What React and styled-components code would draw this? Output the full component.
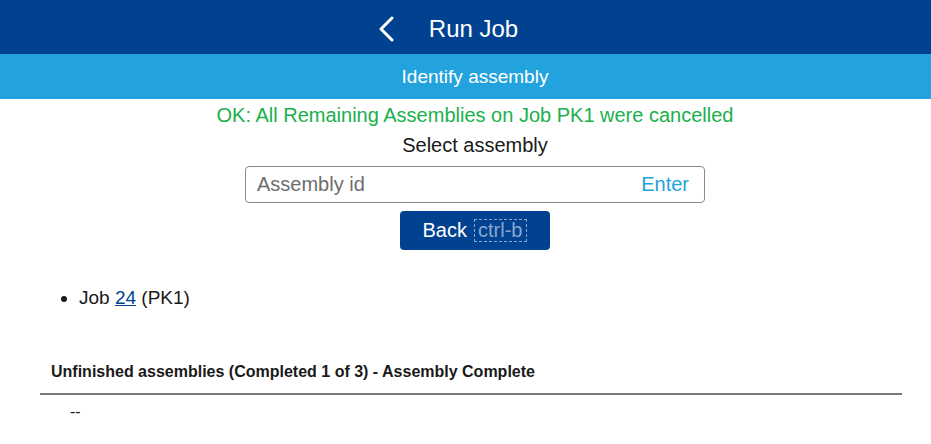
import React from 'react';
import styled, { createGlobalStyle } from 'styled-components';

const GlobalStyle = createGlobalStyle`
  body {
    margin: 0;
    font-family: 'Liberation Sans', Arial, sans-serif;
    background-color: #ffffff;
    color: #1a1a1a;
  }
`;

const TopBar = styled.div`
  height: 54px;
  background-color: #004290;
  color: #fff;
  display: flex;
  align-items: center;
  justify-content: center;
  gap: 34px;
  padding-right: 36px;
`;

const BackIcon = styled.svg`
  width: 18px;
  height: 26px;
  margin-top: 3px;
`;

const Title = styled.div`
  font-size: 24px;
  padding-top: 3px;
`;

const SubBar = styled.div`
  height: 45px;
  background-color: #23a3dd;
  color: #fff;
  font-size: 19px;
  display: flex;
  align-items: center;
  justify-content: center;
  padding-left: 19px;
`;

const Center = styled.div`
  display: flex;
  flex-direction: column;
  align-items: center;
  padding-left: 19px;
`;

const Message = styled.div`
  color: #1ab04c;
  font-size: 20px;
  margin-top: 5px;
  height: 23px;
`;

const Label = styled.div`
  font-size: 20px;
  margin-top: 7px;
  height: 23px;
`;

const InputBox = styled.div`
  height: 35px;
  width: 432px;
  margin-top: 9px;
  border: 1px solid #8a8a8a;
  border-radius: 4px;
  display: flex;
  align-items: center;
  justify-content: space-between;
  padding: 0 15px 0 11px;
  font-size: 20px;
`;

const Placeholder = styled.span`
  color: #6d6d6d;
`;

const EnterLink = styled.span`
  color: #23a3dd;
`;

const BackButton = styled.div`
  width: 150px;
  height: 39px;
  margin-top: 8px;
  background-color: #004290;
  border-radius: 4px;
  color: #fff;
  font-size: 20px;
  display: flex;
  align-items: center;
  justify-content: center;
  gap: 7px;
`;

const Shortcut = styled.span`
  color: #8aa6cc;
  border: 1px dashed #8aa6cc;
  padding: 0 4px 0 3px;
  line-height: 21px;
`;

const JobList = styled.ul`
  margin: 37px 0 0 0;
  padding-left: 79px;
  font-size: 19px;
  line-height: 22px;
  list-style: disc;
`;

const JobLink = styled.a`
  color: #004290;
  text-decoration: underline;
`;

const Section = styled.div`
  margin: 0 29px 0 40px;
  padding-top: 54px;
`;

const SectionHeading = styled.div`
  font-weight: bold;
  font-size: 16px;
  line-height: 18px;
  padding-left: 11px;
  padding-bottom: 12px;
  border-bottom: 2px solid #777;
`;

const Empty = styled.div`
  padding: 8px 0 0 30px;
  font-size: 16px;
  line-height: 18px;
`;

export default function App() {
  return (
    <>
      <GlobalStyle />
      <TopBar>
        <BackIcon viewBox="0 0 18 26">
          <path d="M15 2 L4 13 L15 24" fill="none" stroke="#fff" strokeWidth="3" strokeLinecap="round" strokeLinejoin="round" />
        </BackIcon>
        <Title>Run Job</Title>
      </TopBar>
      <SubBar>Identify assembly</SubBar>
      <Center>
        <Message>OK: All Remaining Assemblies on Job PK1 were cancelled</Message>
        <Label>Select assembly</Label>
        <InputBox>
          <Placeholder>Assembly id</Placeholder>
          <EnterLink>Enter</EnterLink>
        </InputBox>
        <BackButton>
          Back <Shortcut>ctrl-b</Shortcut>
        </BackButton>
      </Center>
      <JobList>
        <li>
          Job <JobLink href="#">24</JobLink> (PK1)
        </li>
      </JobList>
      <Section>
        <SectionHeading>Unfinished assemblies (Completed 1 of 3) - Assembly Complete</SectionHeading>
        <Empty>--</Empty>
      </Section>
    </>
  );
}
